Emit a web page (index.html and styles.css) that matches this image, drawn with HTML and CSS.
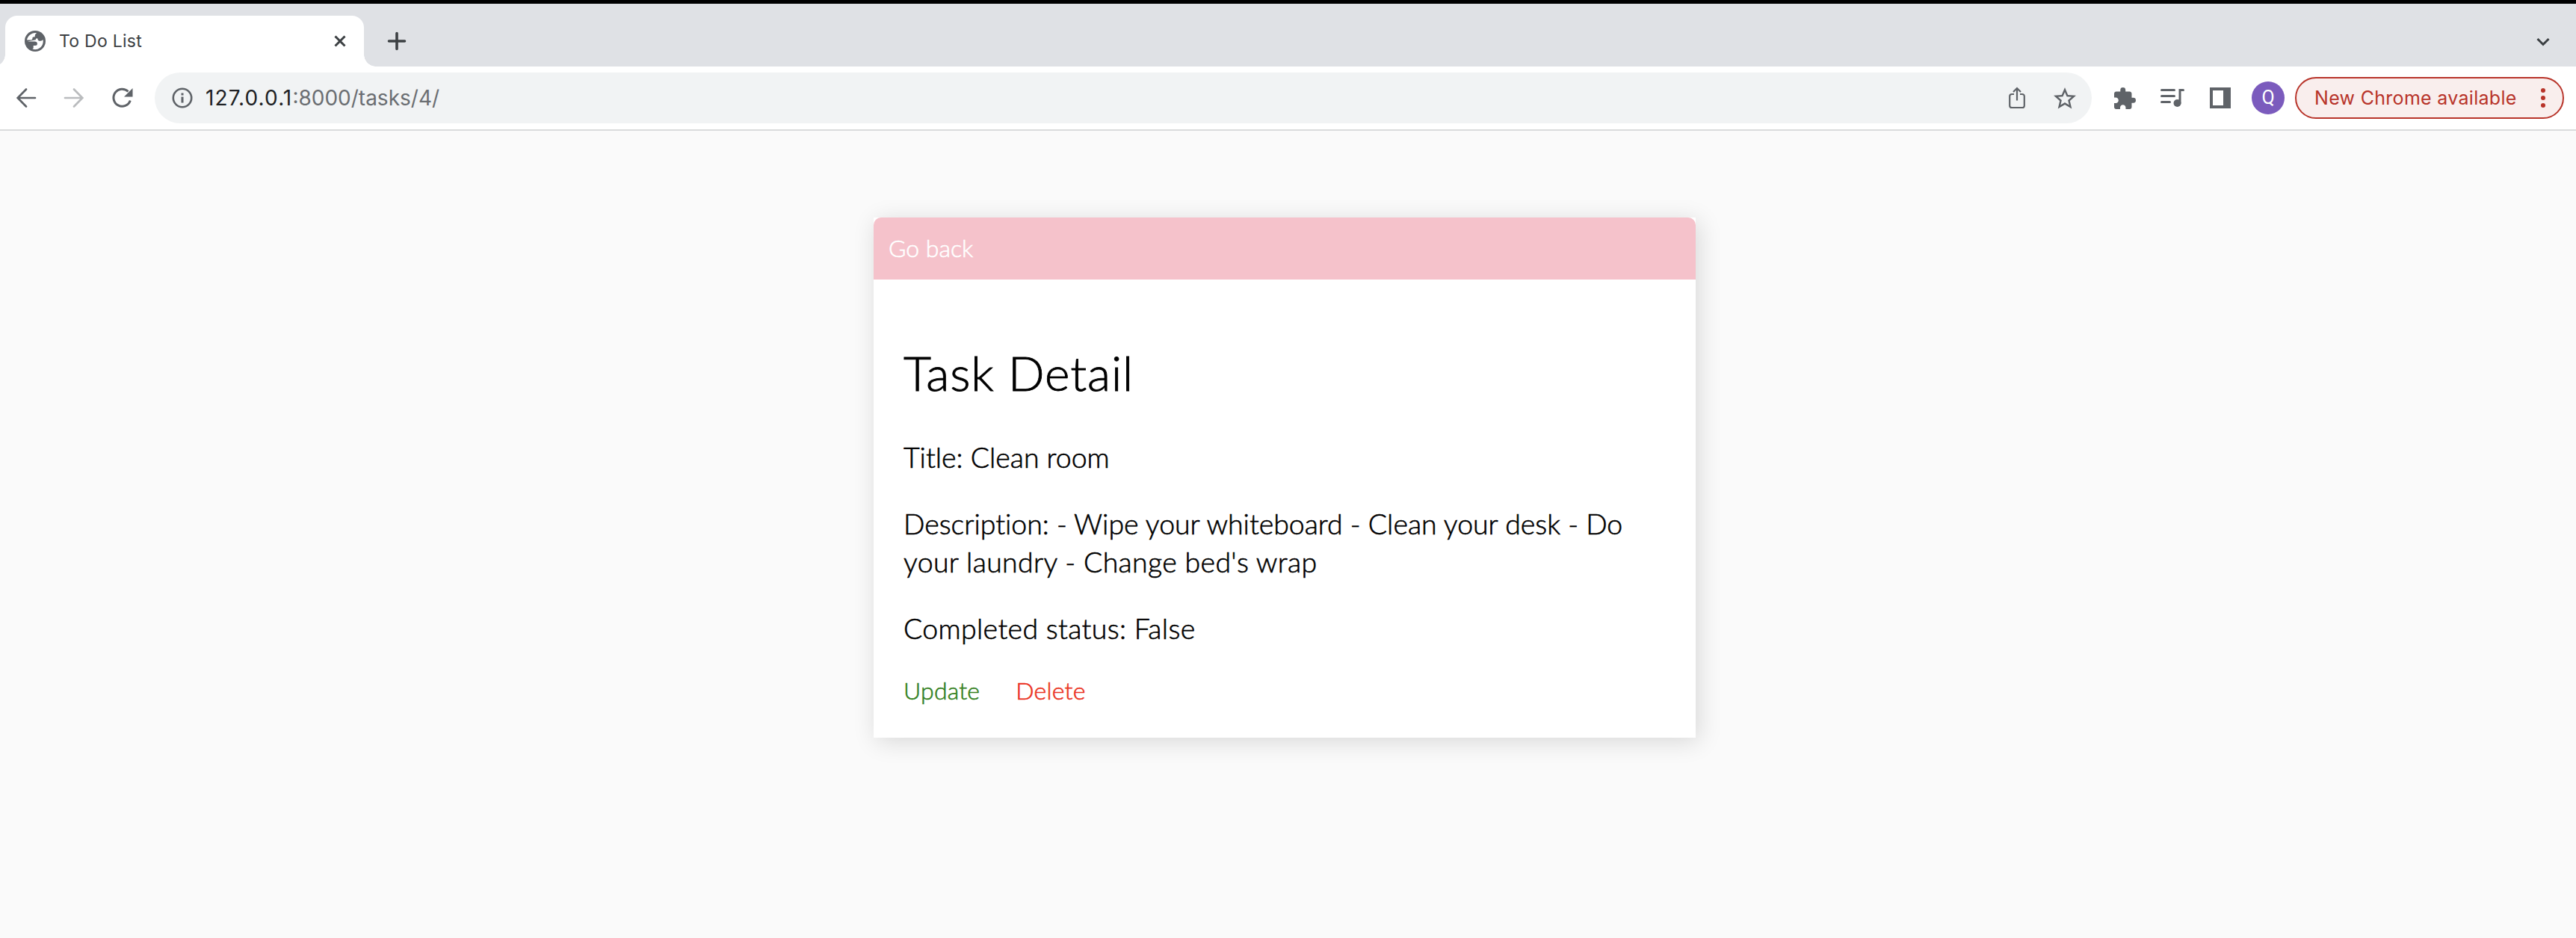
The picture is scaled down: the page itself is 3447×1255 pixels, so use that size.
FILE: index.html
```html
<!DOCTYPE html>
<html lang="en">
<head>
<meta charset="utf-8">
<title>To Do List</title>
<link rel="stylesheet" href="styles.css">
</head>
<body>
<header class="browser">
  <div class="tabstrip">
    <div class="tab">
      <svg class="globe" viewBox="0 0 28 28" width="28" height="28"><circle cx="14" cy="14" r="14" fill="#5f6368"/><path fill="#fff" d="M3 12.500C4 7 8.500 3.200 14.500 3l1.700.3c-1.600.9-2.400 2-2.400 3.400 0 1.400-.3 1.800-1.600 1.800-1.400 0-1.800.6-1.800 1.800 0 1.500-.5 2.200-2 2.200z"/><path fill="#fff" d="M3.500 14.300h9.500c2.500 0 3.700 1.200 3.700 3 0 1.700-.9 2.500-2.600 2.500h-2.600v2.600c0 .9-.6 1.600-1.700 1.600 5.500 2.600 12-.5 14-6 .9-2.400.9-4.600.4-6.200-.8 1.200-1.700 1.700-3.200 1.700-2.300 0-3.700-.8-3.700-2.600v-.7h-1.300c-1.300 0-1.300.3-1.300 1.700z" transform="translate(.2 .3)"/></svg>
      <span class="tab-title">To Do List</span>
      <svg class="close" viewBox="0 0 16 16" width="16" height="16"><path d="M1.500 1.500l13 13M14.500 1.500l-13 13" stroke="#3c4043" stroke-width="3"/></svg>
    </div>
    <svg class="plus" viewBox="0 0 24 24" width="24" height="24"><path d="M12 1.500v21M1.500 12h21" stroke="#3c4043" stroke-width="3.600" stroke-linecap="round"/></svg>
    <svg class="chevron" viewBox="0 0 18 12" width="18" height="12"><path d="M1.500 2L9 9.500 16.500 2" fill="none" stroke="#3c4043" stroke-width="3"/></svg>
  </div>
  <div class="toolbar">
    <svg class="back" viewBox="0 0 26 26" width="26" height="26"><path d="M25 13H2M13 1.500L1.700 13 13 24.500" fill="none" stroke="#5f6368" stroke-width="2.700" stroke-linecap="round"/></svg>
    <svg class="forward" viewBox="0 0 26 26" width="26" height="26"><path d="M1 13h23M13 1.500L24.300 13 13 24.500" fill="none" stroke="#babcbe" stroke-width="2.700" stroke-linecap="round"/></svg>
    <svg class="reload" viewBox="0 0 28 28" width="28" height="28"><path d="M24.300 17.500A11.500 11.500 0 1 1 21.500 5.500" fill="none" stroke="#5f6368" stroke-width="3"/><path d="M27.500 1v11.500H16z" fill="#5f6368"/></svg>
    <div class="omnibox">
      <svg viewBox="0 0 28 28" width="28" height="28"><circle cx="14" cy="14" r="12.200" fill="none" stroke="#5f6368" stroke-width="2.600"/><path d="M14 12.500v8M14 7.500v3" stroke="#5f6368" stroke-width="3"/></svg>
      <span class="url"><span class="host">127.0.0.1</span>:8000/tasks/4/</span>
      <svg class="share" viewBox="0 0 22 30" width="22" height="30"><path d="M7 10H4a2.800 2.800 0 0 0-2.800 2.800v12.400A2.800 2.800 0 0 0 4 28h14a2.800 2.800 0 0 0 2.800-2.800V12.800A2.800 2.800 0 0 0 18 10h-3M11 18.500V2M6 7l5-5 5 5" fill="none" stroke="#5f6368" stroke-width="2.200"/></svg>
      <svg class="star" viewBox="2 2 20 19" width="30" height="28.500"><path fill="#5f6368" d="M22 9.240l-7.190-.62L12 2 9.190 8.630 2 9.240l5.460 4.730L5.820 21 12 17.270 18.180 21l-1.630-7.030L22 9.240zM12 15.400l-3.760 2.270 1-4.280-3.320-2.880 4.380-.38L12 6.100l1.710 4.040 4.380.38-3.320 2.880 1 4.280L12 15.400z"/></svg>
    </div>
    <svg class="puzzle" viewBox="2 1 21 21" width="29" height="29"><path fill="#5f6368" d="M20.500 11H19V7c0-1.100-.9-2-2-2h-4V3.500a2.500 2.500 0 0 0-5 0V5H4c-1.100 0-1.990.9-1.990 2v3.800H3.500c1.490 0 2.700 1.210 2.700 2.700s-1.210 2.700-2.700 2.700H2V20c0 1.100.9 2 2 2h3.800v-1.500c0-1.490 1.210-2.700 2.700-2.700s2.700 1.210 2.700 2.700V22H17c1.100 0 2-.9 2-2v-4h1.500a2.500 2.500 0 0 0 0-5z"/></svg>
    <svg class="media" viewBox="0 0 32 24" width="32" height="24"><path d="M1.500 1.500h17M1.500 9.500h17M1.500 17.500h11M26 19V1.500h4.500" fill="none" stroke="#5f6368" stroke-width="3" stroke-linecap="round"/><circle cx="22.500" cy="19" r="5" fill="#5f6368"/></svg>
    <svg class="panel" viewBox="0 0 28 28" width="28" height="28"><path fill="#5f6368" fill-rule="evenodd" d="M0 0h28v28H0zM4 4v20h14V4z"/></svg>
    <div class="avatar">Q</div>
    <div class="update-pill"><span>New Chrome available</span>
      <svg viewBox="0 0 6 26" width="6" height="26"><circle cx="3" cy="3" r="3"/><circle cx="3" cy="13" r="3"/><circle cx="3" cy="23" r="3"/></svg>
    </div>
  </div>
</header>
<main class="card">
  <div class="card-header"><a class="go-back">Go back</a></div>
  <div class="card-body">
    <h1>Task Detail</h1>
    <h3>Title: Clean room</h3>
    <h3><span class="line">Description: - Wipe your whiteboard - Clean your desk - Do</span> <span class="line spaced">your laundry - Change bed's wrap</span></h3>
    <h3><span class="spaced">Completed status: False</span></h3>
    <div class="actions"><a class="update">Update</a><a class="delete">Delete</a></div>
  </div>
</main>
</body>
</html>
```
FILE: styles.css
```css
* { box-sizing: border-box; }
html, body { height: 100%; }
body { margin: 0; background: #fafafa; font-family: Lato, sans-serif; font-weight: 300; overflow: hidden; }
svg { display: block; flex: none; overflow: visible; }
.browser { font-family: Inter, sans-serif; font-weight: 400; border-top: 5px solid #000; border-bottom: 2px solid #dadbdc; height: 175px; background: #fff; }
.tabstrip { height: 84px; background: #dfe1e5; display: flex; align-items: center; padding: 0 35px 0 7px; }
.tab { position: relative; align-self: flex-end; width: 480px; height: 68px; background: #fff; border-radius: 16px 16px 0 0; display: flex; align-items: center; padding: 0 24px 0 26px; }
.tab::before, .tab::after { content: ""; position: absolute; bottom: 0; width: 16px; height: 16px; }
.tab::before { left: -16px; background: radial-gradient(circle at 0 0, transparent 15.5px, #fff 16px); }
.tab::after { right: -16px; background: radial-gradient(circle at 100% 0, transparent 15.5px, #fff 16px); }
.tab-title { margin-left: 18px; font-size: 23px; letter-spacing: .25px; color: #3c4043; white-space: nowrap; }
.close { margin-left: auto; }
.plus { margin: 16px 0 0 32px; }
.chevron { margin: 18px 0 0 auto; }
.toolbar { height: 84px; display: flex; align-items: center; padding: 0 16px 0 22px; }
.forward { margin-left: 38px; }
.reload { margin-left: 38px; }
.omnibox { margin-left: 29px; width: 2592px; height: 68px; border-radius: 34px; background: #f1f3f4; display: flex; align-items: center; padding: 0 21px 0 23px; }
.url { margin-left: 17px; font-size: 28px; color: #6b6e72; white-space: nowrap; }
.host { color: #202124; letter-spacing: 1.1px; }
.share { margin-left: auto; }
.star { margin-left: 38px; }
.puzzle { margin-left: 30px; }
.media { margin-left: 33px; }
.panel { margin-left: 34px; }
.avatar { margin-left: 28px; width: 44px; height: 44px; border-radius: 50%; background: #7b5bbd; color: #fff; font-family: Roboto, sans-serif; font-size: 25px; line-height: 43px; text-align: center; }
.update-pill { margin-left: 14px; width: 360px; height: 56px; border: 2px solid #b8342a; border-radius: 28px; background: #f9eeed; color: #b8342a; font-size: 25px; letter-spacing: .3px; display: flex; align-items: center; justify-content: space-between; padding: 0 23px 0 24px; white-space: nowrap; }
.update-pill svg { fill: #b8342a; }
.card { width: 1100px; height: 696px; margin: 116px 0 0 1169px; background: #fff; box-shadow: 4px 5px 30px rgba(0,0,0,.14); font-variant-ligatures: none; -webkit-text-stroke: .6px currentColor; }
.card-header { height: 83px; background: #f5c2cb; border-radius: 10px 10px 0 0; padding: 19px 20px; font-size: 32px; line-height: 44px; color: #fff; }
.card-body { padding: 81px 40px 0; color: #000; }
h1, h3 { margin: 0; font-weight: 300; white-space: nowrap; }
h1 { font-size: 64px; line-height: 87px; letter-spacing: .9px; -webkit-text-stroke: .9px #000; }
h3 { font-size: 37.440px; line-height: 51px; margin-top: 38px; }
h1 + h3 { margin-top: 44px; }
.line { display: block; }
.spaced { letter-spacing: .35px; }
.actions { display: flex; font-size: 32px; line-height: 44px; margin-top: 36px; gap: 48px; letter-spacing: .2px; }
.update { color: #35821f; }
.delete { color: #eb3323; }
```
